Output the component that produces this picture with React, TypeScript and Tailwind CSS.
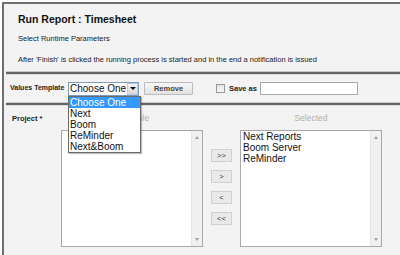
import React from "react";

const available: string[] = [];
const selected = ["Next Reports", "Boom Server", "ReMinder"];
const templates = ["Choose One", "Next", "Boom", "ReMinder", "Next&Boom"];

function ListBox({ items }: { items: string[] }) {
  return (
    <div className="relative flex h-[117px] w-[142px] border border-[#a9a9a9] bg-white">
      <div className="flex-1 pl-[2px] pt-[0px]">
        {items.map((it) => (
          <div key={it} className="text-[10px] leading-[11px] text-[#111]">
            {it}
          </div>
        ))}
      </div>
      <div className="flex w-[11px] flex-col items-center justify-between border-l border-[#e6e6e6] bg-[#f0f0f0] py-[5px]">
        <div className="h-0 w-0 border-x-[2.5px] border-b-[3px] border-x-transparent border-b-[#a0a0a0]"></div>
        <div className="h-0 w-0 border-x-[2.5px] border-t-[3px] border-x-transparent border-t-[#a0a0a0]"></div>
      </div>
    </div>
  );
}

function MoveButton({ label }: { label: string }) {
  return (
    <button className="flex h-[13px] w-[21px] items-center justify-center border border-[#d0d0d0] bg-[#e9e9e9] text-[7.5px] leading-none text-[#333]">
      {label}
    </button>
  );
}

function Separator() {
  return (
    <div className="ml-[2px]">
      <div className="h-px bg-[#c8c8c8]"></div>
      <div className="h-[2px] bg-[#666]"></div>
      <div className="h-px bg-[#dcdcdc]"></div>
    </div>
  );
}

export default function App() {
  return (
    <div className="h-[255px] w-[400px] overflow-hidden bg-white pl-[2px] pt-[2px] font-['Liberation_Sans',Arial,sans-serif]">
      <div className="relative flex h-full flex-col border-l-2 border-t-2 border-[#6f6f6f] bg-[#f3f3f3]">
        {/* header */}
        <div className="h-[67px] pl-[14px]">
          <div className="mt-[9px] text-[10.5px] font-bold leading-[13px] text-[#111]">
            Run Report : Timesheet
          </div>
          <div className="mt-[8px] text-[7.5px] leading-[10px] text-[#222]">
            Select Runtime Parameters
          </div>
          <div className="mt-[11px] text-[7.5px] leading-[10px] text-[#222]">
            After 'Finish' is clicked the running process is started and in the end a notification is issued
          </div>
        </div>
        <Separator />

        {/* template row */}
        <div className="flex h-[27px] items-center pl-[6px]">
          <span className="w-[58px] text-[7px] font-bold text-[#222]">Values Template</span>
          <div className="flex h-[14px] w-[71px] border border-[#7f9db9] bg-white">
            <span className="flex-1 pl-[1px] text-[10px] leading-[12px] text-[#111]">Choose One</span>
            <div className="flex w-[11px] items-center justify-center border border-[#b7c8e0] bg-gradient-to-b from-[#f4f4f4] to-[#d8d8d8]">
              <div className="h-0 w-0 border-x-[3px] border-t-[3px] border-x-transparent border-t-[#111]"></div>
            </div>
          </div>
          <button className="ml-[5px] flex h-[13px] w-[49px] items-center justify-center rounded-[1px] border border-[#bcbcbc] bg-gradient-to-b from-[#f6f6f6] to-[#e2e2e2] text-[7.5px] font-bold leading-none text-[#444]">
            Remove
          </button>
          <div className="ml-[23px] h-[9px] w-[9px] border border-[#9a9a9a] bg-gradient-to-b from-[#e6e6e6] to-[#f6f6f6]"></div>
          <span className="ml-[4px] w-[31px] text-[7.5px] font-bold text-[#222]">Save as</span>
          <div className="h-[13px] w-[98px] border border-[#a9a9a9] bg-white"></div>
        </div>
        <Separator />

        {/* project row */}
        <div className="flex">
          <div className="w-[57px] pl-[8px] pt-[8px] text-[7.5px] font-bold leading-[10px] text-[#222]">
            Project *
          </div>
          <div className="flex flex-col">
            <div className="flex h-[24px] items-center justify-center text-[8.5px] text-[#b0b0b0]">
              Available
            </div>
            <ListBox items={available} />
          </div>
          <div className="flex w-[37px] flex-col pl-[8px]">
            <div className="h-[24px]"></div>
            <div className="flex flex-col gap-[8px] pt-[19px]">
              <MoveButton label=">>" />
              <MoveButton label=">" />
              <MoveButton label="<" />
              <MoveButton label="<<" />
            </div>
          </div>
          <div className="flex flex-col">
            <div className="flex h-[24px] items-center justify-center text-[8.5px] text-[#b0b0b0]">
              Selected
            </div>
            <ListBox items={selected} />
          </div>
        </div>

        {/* open dropdown */}
        <div className="absolute left-[64px] top-[92px] w-[73px] border border-[#6a6a6a] bg-white shadow-[1px_1px_1px_rgba(0,0,0,0.25)]">
          {templates.map((t, i) => (
            <div
              key={t}
              className={
                i === 0
                  ? "bg-[#3399ff] pl-[1px] text-[10px] leading-[11px] text-white"
                  : "pl-[1px] text-[10px] leading-[11px] text-[#111]"
              }
            >
              {t}
            </div>
          ))}
        </div>
      </div>
    </div>
  );
}
